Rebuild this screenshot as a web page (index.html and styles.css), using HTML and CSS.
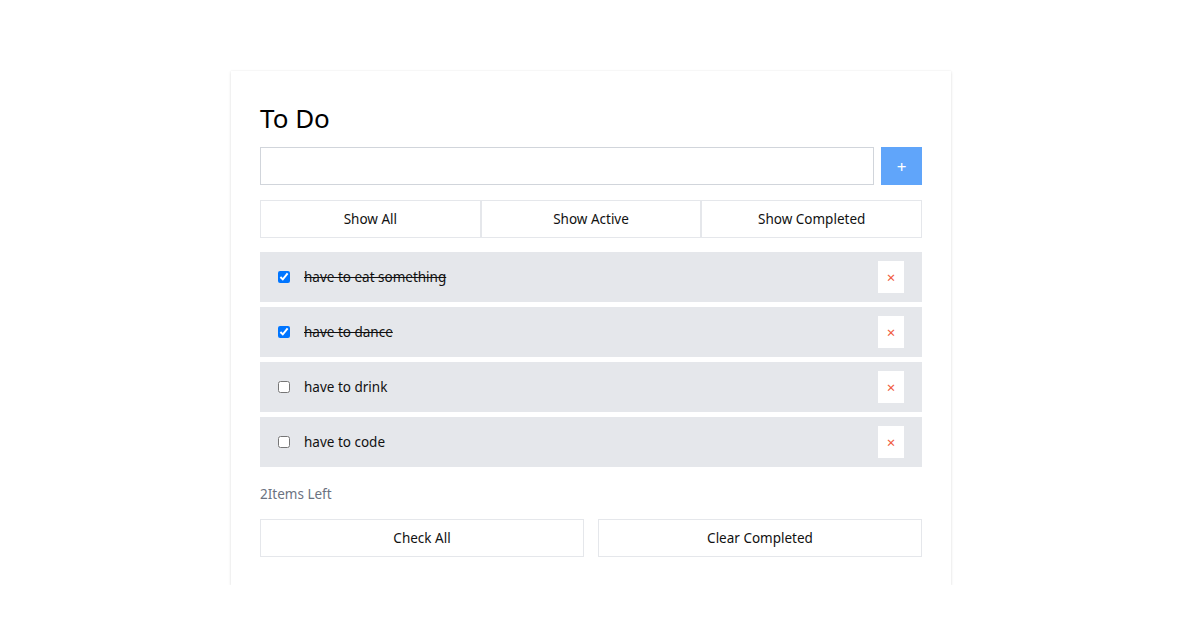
FILE: index.html
```html
<!DOCTYPE html>
<html>
<head>
<meta charset="utf-8">
<link rel="stylesheet" href="styles.css">
</head>
<body>
<div class="page">
  <div class="card">
    <h1 class="title">To Do</h1>
    <div class="add-row">
      <input class="add-input" type="text">
      <button class="add-btn">+</button>
    </div>
    <div class="filters">
      <button class="filter">Show All</button>
      <button class="filter">Show Active</button>
      <button class="filter">Show Completed</button>
    </div>
    <ul class="list">
      <li class="item done"><input type="checkbox" checked class="check"><span class="label">have to eat something</span><button class="del">×</button></li>
      <li class="item done"><input type="checkbox" checked class="check"><span class="label">have to dance</span><button class="del">×</button></li>
      <li class="item"><input type="checkbox" class="check"><span class="label">have to drink</span><button class="del">×</button></li>
      <li class="item"><input type="checkbox" class="check"><span class="label">have to code</span><button class="del">×</button></li>
    </ul>
    <div class="left">2Items Left</div>
    <div class="actions">
      <button class="action">Check All</button>
      <button class="action">Clear Completed</button>
    </div>
  </div>
</div>
</body>
</html>
```
FILE: styles.css
```css
* { box-sizing: border-box; }
body {
  margin: 0;
  background: #fff;
  font-family: "Noto Sans", "Open Sans", sans-serif;
  color: #111;
}
.page {
  display: flex;
  justify-content: center;
  padding-top: 71px;
  padding-right: 11px;
}
.card {
  width: 720px;
  background: #fff;
  padding: 29px 29px 28px;
  box-shadow: 0 1px 3px rgba(0,0,0,0.12), 0 0 1px rgba(0,0,0,0.08);
}
.title {
  margin: 0 0 11px;
  font-size: 26px;
  font-weight: 400;
  line-height: 36px;
  color: #000;
}
.add-row {
  display: flex;
  gap: 7px;
}
.add-input {
  flex: 1;
  height: 38px;
  border: 1px solid #d1d5db;
  margin: 0;
  padding: 0 8px;
  font: inherit;
}
.add-btn {
  width: 41px;
  height: 38px;
  border: 0;
  margin: 0;
  background: #60a5fa;
  color: #fff;
  font-size: 17px;
  font-family: inherit;
  padding: 0;
}
.filters {
  display: grid;
  grid-template-columns: 1fr 1fr 1fr;
  margin-top: 15px;
}
.filter, .action {
  height: 38px;
  margin: 0;
  background: #fff;
  border: 1px solid #e5e7eb;
  font-family: inherit;
  font-size: 13.5px;
  color: #111;
  padding: 0;
}
.list {
  list-style: none;
  margin: 14px 0 0;
  padding: 0;
  display: flex;
  flex-direction: column;
  gap: 5px;
}
.item {
  height: 50px;
  background: #e5e7eb;
  display: flex;
  align-items: center;
  padding: 0 18px 0 18px;
}
.check {
  width: 12px;
  height: 12px;
  margin: 0;
}
.label {
  margin-left: 14px;
  font-size: 13.5px;
  flex: 1;
  color: #111;
}
.done .label { text-decoration: line-through; }
.del {
  width: 26px;
  height: 32px;
  border: 0;
  background: #fff;
  color: #ef5a3c;
  font-size: 15px;
  padding: 0;
  margin: 0;
  font-family: inherit;
  line-height: 1;
}
.left {
  margin-top: 17px;
  font-size: 13.5px;
  line-height: 20px;
  color: #6b7280;
}
.actions {
  margin-top: 15px;
  display: grid;
  grid-template-columns: 1fr 1fr;
  gap: 14px;
}
```
